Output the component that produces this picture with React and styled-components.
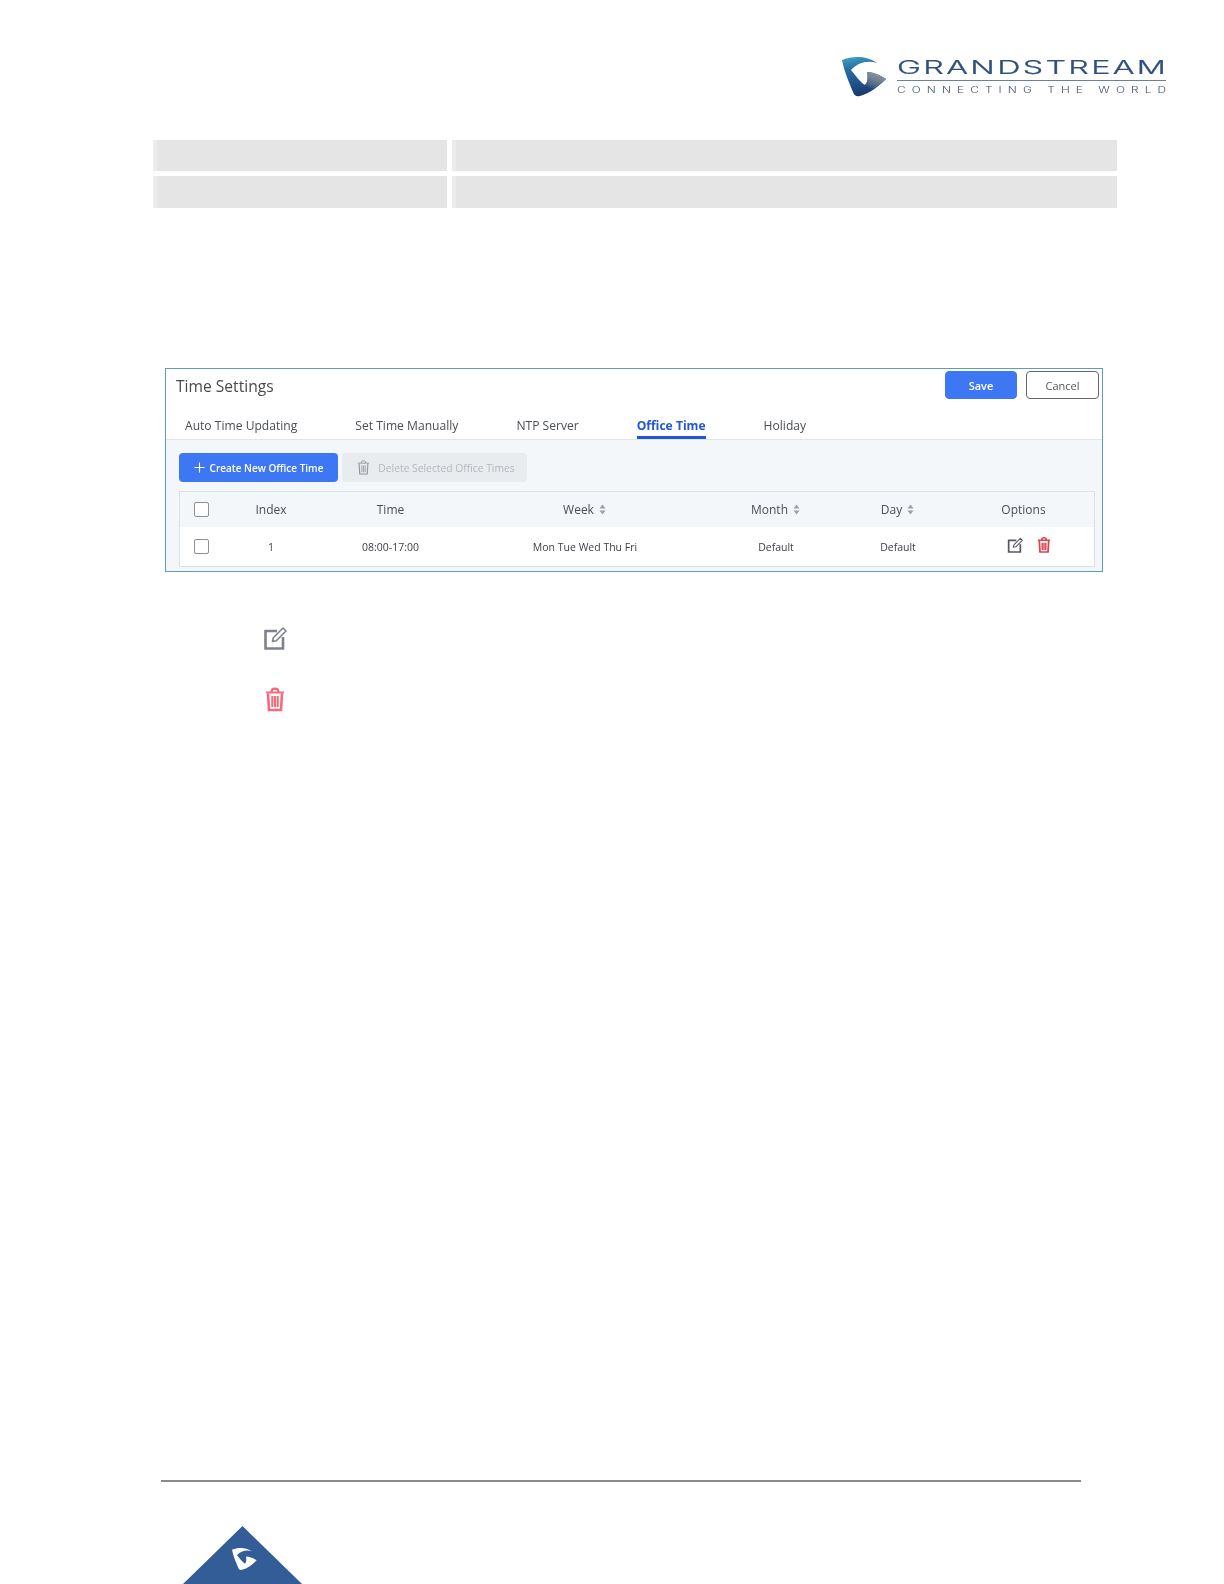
import React from "react";
import styled, { createGlobalStyle } from "styled-components";

const Global = createGlobalStyle`
  html, body { margin: 0; padding: 0; background: #fff; }
  body { font-family: "Open Sans", "Liberation Sans", sans-serif; color: #3c4048; }
`;

const Page = styled.div`
  width: 1224px; height: 1584px; overflow: hidden;
  display: flex; flex-direction: column; background: #fff;
`;
const LogoRow = styled.header`
  height: 140px; box-sizing: border-box; padding: 55px 56px 0 0;
  display: flex; justify-content: flex-end; align-items: flex-start;
`;
const LogoSvg = styled.svg`display: block; filter: blur(0.35px);`;

const GreyTable = styled.div`
  margin-left: 153px; width: 964px;
  display: grid; grid-template-columns: 294px 1fr; column-gap: 5px; row-gap: 5px;
  grid-template-rows: 31px 32px;
`;
const GreyCell = styled.div`
  background: #e5e5e5; border-left: 4px solid #ebebeb;
`;

const Panel = styled.section`
  margin: 160px 0 0 165px; width: 938px; height: 204px; box-sizing: border-box;
  border: 1px solid #5b9bc4; background: #fff;
  display: flex; flex-direction: column; filter: blur(0.25px);
`;
const TitleBar = styled.div`
  height: 37px; display: flex; align-items: flex-start; justify-content: space-between;
  padding: 2px 3px 0 10px; box-sizing: border-box;
`;
const Title = styled.h1`
  margin: 3px 0 0; font-size: 15.6px; line-height: 24px; font-weight: 400; color: #4a4a4a;
`;
const Actions = styled.div`display: flex; gap: 9px;`;
const HeadButton = styled.button`
  width: ${p => (p.$primary ? 72 : 73)}px; height: 28px; box-sizing: border-box; padding: 0;
  border-radius: 4px; font-family: inherit; font-size: 11px;
  font-weight: ${p => (p.$primary ? 600 : 400)};
  color: ${p => (p.$primary ? "#fff" : "#555")};
  background: ${p => (p.$primary ? "#3e77f4" : "#fff")};
  border: 1px solid ${p => (p.$primary ? "#3e77f4" : "#666")};
`;
const Tabs = styled.nav`
  height: 34px; box-sizing: border-box; border-bottom: 1px solid #e1e5ea;
  display: flex; padding-left: 19px; gap: 58px;
`;
const Tab = styled.span`
  height: 33px; box-sizing: border-box; padding-top: 11px;
  font-size: 12.1px; line-height: 18px; white-space: nowrap;
  font-weight: ${p => (p.$active ? 700 : 400)};
  color: ${p => (p.$active ? "#2257d4" : "#4a4e55")};
  border-bottom: 3px solid ${p => (p.$active ? "#2257d4" : "transparent")};
`;
const Body = styled.div`
  flex: 1; background: #f4f7fa; padding: 13px 7px 4px 13px;
  display: flex; flex-direction: column; gap: 9px;
`;
const Toolbar = styled.div`display: flex; gap: 4px; align-items: center; height: 29px;`;
const CreateButton = styled.button`
  width: 159px; height: 29px; box-sizing: border-box; border: 0; border-radius: 4px;
  background: #3e77f4; color: #fff; font-family: inherit; font-size: 10px; font-weight: 600;
  display: flex; align-items: center; justify-content: center; gap: 5px; padding: 0;
`;
const DeleteButton = styled.button`
  width: 185px; height: 29px; box-sizing: border-box; border: 0; border-radius: 4px;
  background: #e9ecef; color: #b4b8bd; font-family: inherit; font-size: 10.3px; font-weight: 400;
  display: flex; align-items: center; justify-content: center; gap: 8px; padding: 0 0 0 3px;
`;
const Table = styled.div`
  width: 916px; height: 76px; box-sizing: border-box; border: 1px solid #dde1e6; background: #fff;
`;
const Row = styled.div`
  display: grid; grid-template-columns: 42px 98px 141px 248px 134px 110px 141px;
  align-items: center; justify-items: center;
  height: ${p => (p.$head ? 35 : 39)}px;
  background: ${p => (p.$head ? "#f4f7fa" : "#fff")};
  font-size: ${p => (p.$head ? 12 : 10.5)}px;
  color: ${p => (p.$head ? "#4a4e55" : "#3c4048")};
`;
const Check = styled.span`
  width: 13px; height: 13px; border: 1px solid #8d9096; border-radius: 2px; background: #fff; display: block;
`;
const SortLabel = styled.span`display: inline-flex; align-items: center; gap: 5px; margin-left: -1px;`;
const Options = styled.span`display: flex; align-items: flex-start; gap: 14px; padding-left: 10px; margin-top: -3px;`;
const IconList = styled.div`
  margin: 54px 0 0 263px; display: flex; flex-direction: column; align-items: flex-start; gap: 36px;
`;
const IconSlot = styled.div`
  width: 24px; height: 25px; display: flex; justify-content: center; filter: blur(0.3px);
`;
const Footer = styled.footer`margin-top: auto; height: 104px;`;
const Rule = styled.div`margin-left: 161px; width: 920px; height: 2px; background: #8a8a8a;`;
const Triangle = styled.svg`display: block; margin: 44px 0 0 183px;`;

const MARK = "M0 3C10-1 24-2 35 6C26 3 16 5 9 13C14 19 18 25 23 28C26 25 26 20 25 15C31 15 38 18 44 22C36 30 28 36 18 39C14 40 12 38 11 35C7 25 2 14 0 3Z";

const Logo = () => (
  <LogoSvg width="326" height="44" viewBox="0 0 326 44">
    <defs>
      <linearGradient id="mk" x1="0.3" y1="0" x2="0.5" y2="1">
        <stop offset="0" stopColor="#3c9dba" />
        <stop offset="0.25" stopColor="#2a6fa5" />
        <stop offset="0.7" stopColor="#1d4f8a" />
        <stop offset="1" stopColor="#1b3560" />
      </linearGradient>
      <linearGradient id="gr" x1="0.7" y1="0" x2="0.3" y2="1">
        <stop offset="0" stopColor="#9a9da2" />
        <stop offset="0.55" stopColor="#66758c" />
        <stop offset="1" stopColor="#1f4a80" />
      </linearGradient>
    </defs>
    <g transform="translate(0 2)">
      <path d={MARK} fill="url(#mk)" />
      <path d="M25 15C31 15 38 18 44 22C40 26 35 30 30 33C28 30 26 29 23 28C26 25 26 20 25 15Z" fill="url(#gr)" />
    </g>
    <text transform="translate(55 19) scale(1.75 1)" fontFamily="Inter" fontWeight="300" fontSize="18.5" textLength={269 / 1.75} lengthAdjust="spacing" stroke="#2f4f7c" strokeWidth="0.25" fill="#2f4f7c">GRANDSTREAM</text>
    <rect x="55" y="25" width="269" height="1" fill="#6f7f98" />
    <text transform="translate(55 38) scale(1.4 1)" fontFamily="Inter" fontWeight="300" fontSize="8.500" textLength={269 / 1.4} lengthAdjust="spacing" fill="#3f5473">CONNECTING THE WORLD</text>
  </LogoSvg>
);

const EditIcon = ({ size, color }) => (
  <svg width={size} height={size} viewBox="0 0 24 24" fill="none" stroke={color}>
    <path d="M14 5H2.500v17.500H20V11" strokeWidth="2.600" />
    <path d="M9.500 15.500l.8-3.800L20 2l3 3-9.700 9.700z" strokeWidth="1.600" strokeLinejoin="round" />
  </svg>
);
const TrashIcon = ({ w, h, color, sw = 2.6 }) => (
  <svg width={w} height={h} viewBox="0 0 20 24" fill="none" stroke={color}>
    <path d="M1 5h18M6.500 4.500C6.500 2 8 1.200 10 1.200S13.500 2 13.500 4.500" strokeWidth={sw * 0.85} />
    <path d="M3 6l1 16.500h12L17 6" strokeWidth={sw} />
    <path d="M7.300 8.500v11M10 8.500v11M12.700 8.500v11" strokeWidth={sw * 0.8} />
  </svg>
);
const Sort = () => (
  <svg width="7" height="11" viewBox="0 0 7 11" fill="#9aa0a8">
    <path d="M3.500 0.500L6.500 4.500H.5zM3.500 10.500L.5 6.500H6.500z" />
  </svg>
);
const Plus = () => (
  <svg width="11" height="11" viewBox="0 0 11 11" stroke="#fff" strokeWidth="1.100">
    <path d="M5.500 .5v10M.5 5.500h10" />
  </svg>
);

export default function App() {
  return (
    <Page>
      <Global />
      <LogoRow><Logo /></LogoRow>
      <GreyTable>
        <GreyCell /><GreyCell /><GreyCell /><GreyCell />
      </GreyTable>
      <Panel>
        <TitleBar>
          <Title>Time Settings</Title>
          <Actions>
            <HeadButton $primary>Save</HeadButton>
            <HeadButton>Cancel</HeadButton>
          </Actions>
        </TitleBar>
        <Tabs>
          <Tab>Auto Time Updating</Tab>
          <Tab>Set Time Manually</Tab>
          <Tab>NTP Server</Tab>
          <Tab $active>Office Time</Tab>
          <Tab>Holiday</Tab>
        </Tabs>
        <Body>
          <Toolbar>
            <CreateButton><Plus />Create New Office Time</CreateButton>
            <DeleteButton><TrashIcon w={13} h={15} color="#8f949a" sw={1.700} />Delete Selected Office Times</DeleteButton>
          </Toolbar>
          <Table>
            <Row $head>
              <Check />
              <span>Index</span>
              <span>Time</span>
              <SortLabel>Week <Sort /></SortLabel>
              <SortLabel>Month <Sort /></SortLabel>
              <SortLabel>Day <Sort /></SortLabel>
              <span>Options</span>
            </Row>
            <Row>
              <Check />
              <span>1</span>
              <span>08:00-17:00</span>
              <span>Mon Tue Wed Thu Fri</span>
              <span>Default</span>
              <span>Default</span>
              <Options>
                <EditIcon size={16} color="#55585f" />
                <TrashIcon w={14} h={16} color="#d5414f" />
              </Options>
            </Row>
          </Table>
        </Body>
      </Panel>
      <IconList>
        <IconSlot><EditIcon size={24} color="#7f818e" /></IconSlot>
        <IconSlot><TrashIcon w={20} h={25} color="#f66b79" /></IconSlot>
      </IconList>
      <Footer>
        <Rule />
        <Triangle width="120" height="58" viewBox="0 0 120 58">
          <path d="M59.500 0L119 58H0z" fill="#325d97" />
          <g transform="translate(49 22) scale(0.56)">
            <path d={MARK} fill="#fff" />
          </g>
        </Triangle>
      </Footer>
    </Page>
  );
}
